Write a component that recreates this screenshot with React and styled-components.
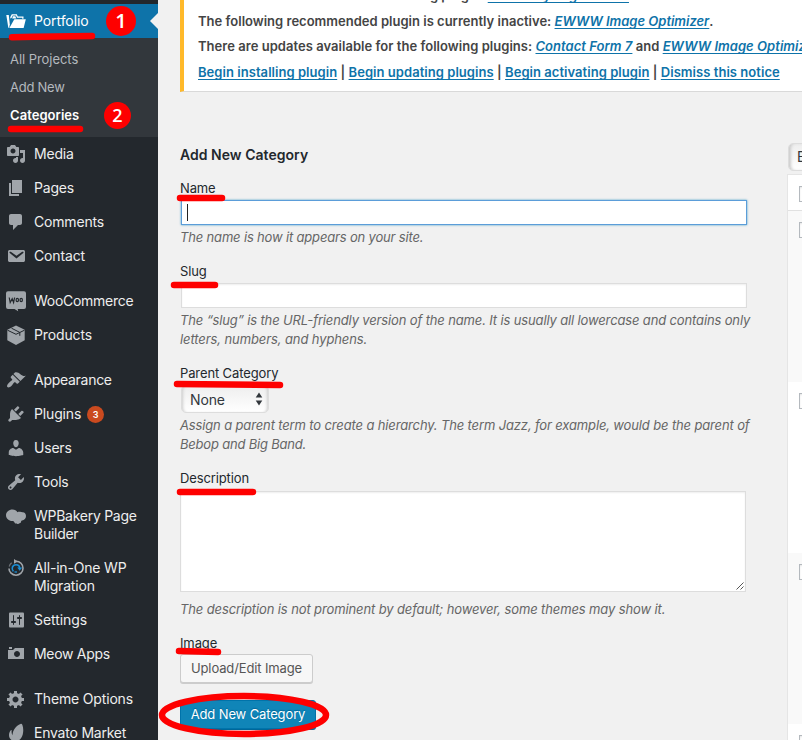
import React from 'react';
import styled, { createGlobalStyle, css } from 'styled-components';

const GlobalStyle = createGlobalStyle`
  * { box-sizing: border-box; }
  html, body { margin: 0; overflow: hidden; background: #f1f1f1; }
  body {
    font-family: Inter, "Liberation Sans", sans-serif;
    font-size: 13px;
    color: #444;
  }
`;

const Page = styled.div`
  position: relative;
  display: flex;
  width: 802px;
  height: 740px;
  overflow: hidden;
  background: #f1f1f1;
`;

/* ---------- sidebar ---------- */

const Sidebar = styled.nav`
  flex: none;
  width: 158px;
  height: 740px;
  padding-top: 4px;
  overflow: hidden;
  background: #23282d;
`;

const MenuItem = styled.a`
  position: relative;
  display: flex;
  align-items: flex-start;
  height: ${(p) => (p.$tall ? 52 : 34)}px;
  padding: 8px 0 0 34px;
  margin-top: ${(p) => (p.$gap ? 11 : 0)}px;
  color: ${(p) => (p.$active ? '#fff' : '#eee')};
  background: ${(p) => (p.$active ? '#0e73a9' : 'transparent')};
  font-size: 14px;
  line-height: 18px;
  white-space: pre-line;
`;

const MenuText = styled.span`
  letter-spacing: ${(p) => p.$ls || 0}px;
`;

const MenuIcon = styled.svg`
  position: absolute;
  left: 6px;
  top: 7px;
  width: 20px;
  height: 20px;
  fill: ${(p) => (p.$active ? '#fff' : '#a0a5aa')};
`;

const CurrentArrow = styled.span`
  position: absolute;
  right: 0;
  top: 9px;
  border: 8px solid transparent;
  border-left: 0;
  border-right-color: #f1f1f1;
`;

const Submenu = styled.div`
  height: 99px;
  padding: 7px 10px 8px;
  background: #32373c;
`;

const SubmenuItem = styled.a`
  display: block;
  height: 28px;
  line-height: 28px;
  font-size: 13px;
  letter-spacing: ${(p) => p.$ls || 0}px;
  color: ${(p) => (p.$current ? '#fff' : '#b4b9be')};
  font-weight: ${(p) => (p.$current ? 600 : 400)};
`;

const CountBadge = styled.span`
  width: 17px;
  height: 17px;
  margin: 1px 0 0 6px;
  border-radius: 50%;
  background: #ca4a1f;
  color: #fff;
  font-size: 9px;
  font-weight: 600;
  line-height: 17px;
  text-align: center;
`;

/* ---------- content ---------- */

const Content = styled.main`
  flex: 1;
  min-width: 0;
  height: 740px;
  padding-left: 22px;
  overflow: hidden;
`;

const Notice = styled.section`
  height: 92px;
  padding-left: 14px;
  border-left: 4px solid #ffb92a;
  border-bottom: 1px solid #d9d9d9;
  background: #fff;
  overflow: hidden;
`;

const NoticeLines = styled.div`
  display: flex;
  flex-direction: column;
  gap: 5.5px;
  margin-top: -15px;
`;

const NoticeLine = styled.div`
  height: 20px;
  line-height: 20px;
  font-weight: 600;
  white-space: pre;
  letter-spacing: ${(p) => p.$ls || 0}px;
`;

const NoticeLink = styled.a`
  color: #0e73a9;
  letter-spacing: ${(p) => (p.$ls ? `${p.$ls}px` : 'inherit')};
  font-style: ${(p) => (p.$italic ? 'italic' : 'normal')};
  text-decoration: underline;
  text-underline-offset: 2px;
  text-decoration-thickness: 1px;
  text-decoration-skip-ink: none;
`;

const Columns = styled.div`
  display: flex;
  margin-top: 51px;
`;

const Form = styled.form`
  flex: none;
  width: 607px;
  padding-top: 2px;
`;

const FormTitle = styled.h2`
  margin: 0 0 14px;
  height: 20px;
  line-height: 20px;
  font-size: 14px;
  font-weight: 600;
  letter-spacing: 0.03px;
  color: #23282d;
`;

const Field = styled.div`
  display: flex;
  flex-direction: column;
  align-items: flex-start;
  margin-bottom: 15px;
`;

const Label = styled.label`
  height: 19px;
  line-height: 19px;
  font-size: 13px;
  letter-spacing: -0.12px;
  color: #23282d;
`;

const Hint = styled.p`
  margin: ${(p) => p.$top || 3}px 0 0;
  font-style: italic;
  line-height: 19px;
  color: #666;
  white-space: pre;
`;

const HintLine = styled.span`
  display: block;
  letter-spacing: ${(p) => p.$ls || -0.14}px;
`;

const inputBox = css`
  border: 1px solid #ddd;
  background: #fff;
  box-shadow: inset 0 1px 2px rgba(0, 0, 0, 0.07);
`;

const TextInput = styled.div`
  ${inputBox}
  display: flex;
  align-items: center;
  width: 566px;
  height: 25px;
  margin: 2px 0 0 1px;
  padding-left: 5px;
  ${(p) => p.$focused && css`
    border-color: #5b9dd9;
    box-shadow: 0 0 2px rgba(30, 140, 190, 0.8);
  `}
`;

const Caret = styled.span`
  width: 1px;
  height: 17px;
  background: #222;
`;

const TextArea = styled.div`
  ${inputBox}
  display: flex;
  align-items: flex-end;
  justify-content: flex-end;
  width: 566px;
  height: 101px;
  margin-top: 3px;
  padding: 1px;
`;

const SelectBox = styled.div`
  display: flex;
  align-items: center;
  justify-content: space-between;
  width: 88px;
  height: 28px;
  margin: 2px 0 0 1px;
  padding: 0 5px 0 8px;
  border: 1px solid #ddd;
  border-radius: 5px;
  background: linear-gradient(#eee, #fff);
  box-shadow: inset 3px 0 3px -2px #ccc, inset -3px 0 3px -2px #ccc;
  color: #32373c;
  font-size: 14px;
  letter-spacing: -0.15px;
`;

const Button = styled.button`
  display: flex;
  align-items: center;
  justify-content: center;
  width: ${(p) => p.$width}px;
  height: 29px;
  padding: 0 0 1px;
  margin: 1px 0 0;
  border: 1px solid ${(p) => (p.$primary ? '#0073aa' : '#ccc')};
  border-radius: 3px;
  box-shadow: 0 1px 0 ${(p) => (p.$primary ? '#006799' : '#ccc')};
  background: ${(p) => (p.$primary ? '#1085b8' : '#f7f7f7')};
  color: ${(p) => (p.$primary ? '#fff' : '#555')};
  text-shadow: ${(p) => (p.$primary ? '0 -1px 1px #006799' : 'none')};
  font: 13px Inter, "Liberation Sans", sans-serif;
  letter-spacing: -0.13px;
  white-space: nowrap;
`;

const Submit = styled.div`
  padding-top: 1px;
`;

/* ---------- term list ---------- */

const TermList = styled.section`
  flex: none;
  width: 200px;
`;

const BulkSelect = styled.div`
  height: 28px;
  margin: 0 0 3px 1px;
  padding-left: 8px;
  border: 1px solid #ddd;
  border-radius: 5px;
  background: linear-gradient(#eee, #fff);
  box-shadow: inset 3px 0 3px -1px #ccc;
  color: #32373c;
  font-size: 14px;
  line-height: 26px;
`;

const TermTable = styled.div`
  border: 1px solid #e5e5e5;
  background: #fff;
`;

const TermRow = styled.div`
  height: ${(p) => (p.$head ? 36 : 171)}px;
  padding: 11px;
  border-bottom: ${(p) => (p.$head ? '1px solid #e1e1e1' : '0')};
  background: ${(p) => (p.$alt ? '#f9f9f9' : '#fff')};
`;

const Checkbox = styled.span`
  display: block;
  width: 16px;
  height: 16px;
  border: 1px solid #b4b9be;
  background: #fff;
  box-shadow: inset 0 1px 2px rgba(0, 0, 0, 0.1);
`;

/* ---------- annotations ---------- */

const MarkerLayer = styled.svg`
  position: absolute;
  inset: 0;
  width: 802px;
  height: 740px;
  pointer-events: none;
  fill: none;
  stroke: #fe0000;
  stroke-linecap: round;
`;

const StepBadge = styled.span`
  position: absolute;
  left: ${(p) => p.$x}px;
  top: ${(p) => p.$y}px;
  width: ${(p) => p.$size}px;
  height: ${(p) => p.$size}px;
  border-radius: 50%;
  background: #fe0000;
  color: #fff;
  font-family: "Open Sans", sans-serif;
  font-size: ${(p) => p.$font}px;
  font-weight: 600;
  line-height: ${(p) => p.$size}px;
  text-align: center;
`;

const icons = {
  portfolio: (
    <>
      <path d="M.3 4h2.500l1 9.500L3.200 16.800H2.300z" />
      <path d="M4.300 7.500V6l1.500-2.800h5l1 2.300h5.700v2.300h-1.300V6.700H11l-1-2.300H6.700L5.500 7z" />
      <path d="M8.300 8.200H19.800L17.600 17H3.400z" />
      <path d="M6.900 5.200h2.400l1 2.300H6.200z" />
    </>
  ),
  media: <path d="M13 11V4c0-.55-.45-1-1-1h-1.67L9 1H5L3.67 3H2c-.55 0-1 .45-1 1v7c0 .55.45 1 1 1h10c.55 0 1-.45 1-1zM7 4.5c1.38 0 2.5 1.12 2.5 2.5S8.38 9.5 7 9.5 4.5 8.38 4.5 7 5.62 4.5 7 4.5zM14 6h5v10.5c0 1.38-1.12 2.5-2.5 2.5S14 17.88 14 16.5s1.12-2.5 2.5-2.5c.17 0 .34.02.5.05V9h-3V6zm-4 8.05V13h2v3.5c0 1.38-1.12 2.5-2.5 2.5S7 17.88 7 16.5 8.12 14 9.5 14c.17 0 .34.02.5.05z" />,
  pages: <path d="M6 15V2h10v13H6zm-1 1h8v2H3V5h2v11z" />,
  comments: <path d="M5 2h9c1.1 0 2 .9 2 2v7c0 1.1-.9 2-2 2h-2l-5 5v-5H5c-1.1 0-2-.9-2-2V4c0-1.1.9-2 2-2z" />,
  mail: <path d="M3.87 4h13.25C18.37 4 19 4.59 19 5.79v8.42c0 1.19-.63 1.79-1.88 1.79H3.87c-1.25 0-1.88-.6-1.88-1.79V5.79c0-1.2.63-1.79 1.88-1.79zm6.62 8.6l6.74-5.53c.24-.2.43-.66.13-1.07-.29-.41-.82-.42-1.17-.17l-5.7 3.86L4.8 5.83c-.35-.25-.88-.24-1.17.17-.3.41-.11.87.13 1.07z" />,
  woo: (
    <>
      <path d="M2 .3h16a2 2 0 0 1 2 2V16a2 2 0 0 1-2 2h-6.300l.5 2.200L8.500 18H2a2 2 0 0 1-2-2V2.300a2 2 0 0 1 2-2z" />
      <path d="M3.200 6.500l1 5 2-3.800 1.400 3.800 1-5" fill="none" stroke="#23282d" strokeWidth="1.200" />
      <g fill="none" stroke="#23282d" strokeWidth="1.200">
        <ellipse cx="11.300" cy="9" rx="1.200" ry="1.700" />
        <ellipse cx="15.200" cy="9" rx="1.200" ry="1.700" />
      </g>
    </>
  ),
  products: (
    <>
      <path d="M10 .5l8.700 4.200v10.500L10 20l-8.700-4.800V4.700z" />
      <path d="M1.500 5.200L10 9.300l8.500-4.100M5.500 3.200l8.300 4.200v3.400M10 9.500" fill="none" stroke="#23282d" strokeWidth="1" />
    </>
  ),
  appearance: <path d="M14.48 11.06L7.41 3.99l1.5-1.5c.5-.56 2.3-.47 3.51.32 1.21.8 1.43 1.28 2.91 2.1 1.18.64 2.45 1.26 4.45.85zm-.71.71L6.7 4.7 4.93 6.47c-.39.39-.39 1.02 0 1.41l1.06 1.06c.39.39.39 1.03 0 1.42-.6.6-1.43 1.11-2.21 1.69-.35.26-.7.53-1.01.84C1.43 14.23.4 16.08 1.4 17.07c.99 1 2.84-.03 4.18-1.36.31-.31.58-.66.85-1.02.57-.78 1.08-1.61 1.69-2.21.39-.39 1.02-.39 1.41 0l1.06 1.06c.39.39 1.02.39 1.41 0z" />,
  plugins: <path d="M13.11 4.36L9.87 7.6 8 5.73l3.24-3.24c.35-.34 1.05-.2 1.56.32.52.51.66 1.21.31 1.55zm-8 1.77l.91-1.12 9.01 9.01-1.19.84c-.71.71-2.63 1.16-3.82 1.16H6.14L4.9 17.26c-.59.59-1.54.59-2.12 0-.59-.58-.59-1.53 0-2.12l1.24-1.24v-3.88c0-1.13.4-3.19 1.09-3.89zm7.26 3.97l3.24-3.24c.34-.35 1.04-.21 1.55.31.52.51.66 1.21.31 1.55l-3.24 3.25z" />,
  users: <path d="M10 9.25c-2.27 0-2.73-3.44-2.73-3.44C7 4.02 7.82 2 9.97 2c2.16 0 2.98 2.02 2.71 3.81 0 0-.41 3.44-2.68 3.44zm0 2.57L12.72 10c2.39 0 4.52 2.33 4.52 4.53v2.49s-3.65 1.13-7.24 1.13c-3.65 0-7.24-1.13-7.24-1.13v-2.49c0-2.25 1.94-4.48 4.47-4.48z" />,
  tools: <path d="M16.68 9.77c-1.34 1.34-3.3 1.67-4.95.99l-5.41 6.52c-.99.99-2.59.99-3.58 0s-.99-2.59 0-3.57l6.52-5.42c-.68-1.65-.35-3.61.99-4.95 1.28-1.28 3.12-1.62 4.72-1.06l-2.89 2.89 2.82 2.82 2.86-2.87c.53 1.58.18 3.39-1.08 4.65zM3.81 16.21c.4.39 1.04.39 1.43 0 .4-.4.4-1.04 0-1.43-.39-.4-1.03-.4-1.43 0-.39.39-.39 1.03 0 1.43z" />,
  bakery: (
    <path d="M6.500 3.500c2.300 0 4 .9 4.900 2.700.6-.4 1.400-.5 2.200-.4 1-.1 2 .1 2.800.5 1.900-.3 3.600 1.500 3.600 3.700 0 2.400-1.600 4.300-4 4.400l-.9.5c.3 1-.4 2.300-1.600 2.300-.8.9-2 .9-2.700.2-1 .5-2.200 0-2.400-1.200-.4-.6-.8-1-1.300-1.200C3.200 15.400 0 12.700 0 9.300c0-3.300 2.900-5.800 6.500-5.800z" />
  ),
  migration: (
    <g fill="none" strokeWidth="1.600">
      <path d="M10 3.300c4 0 7 3 7 6.900 0 3.900-3.100 7-7 7s-7-3.100-7-6.800" stroke="#a0a5aa" />
      <path d="M3.200 8.500c.4-1.600 1.200-2.800 2.500-3.800" stroke="#6d7379" strokeWidth="1.200" />
      <path d="M8 1v4.800L11.800 3.500z" fill="#a0a5aa" stroke="none" />
      <path d="M7.400 13.300C5 11 6.300 6.700 10 6.700c2.100 0 3.600 1.500 3.600 3.300" stroke="#1b8fd6" />
      <path d="M11.300 9.500h5l-2.700 3.200z" fill="#1b8fd6" stroke="none" />
      <path d="M8.500 14h2.500" stroke="#1b8fd6" strokeWidth="1.300" />
    </g>
  ),
  settings: <path d="M18 16V4c0-1.1-.4-1.500-1.500-1.500H4.500C3.400 2.500 3 2.900 3 4v12c0 1.100.4 1.500 1.500 1.500h12c1.100 0 1.500-.4 1.500-1.500zM8 11h1c.55 0 1 .45 1 1s-.45 1-1 1H8v1.5c0 .28-.22.5-.5.5s-.5-.22-.5-.5V13H6c-.55 0-1-.45-1-1s.45-1 1-1h1V5.5c0-.28.22-.5.5-.5s.5.22.5.5V11zm5-2h-1c-.55 0-1-.45-1-1s.45-1 1-1h1V5.5c0-.28.22-.5.5-.5s.5.22.5.5V7h1c.55 0 1 .45 1 1s-.45 1-1 1h-1v5.5c0 .28-.22.5-.5.5s-.5-.22-.5-.5V9z" />,
  camera: <path d="M6 5V3H3v2h3zm12 10V4H9L7 6H2v9h16zm-7-8c1.65 0 3 1.35 3 3s-1.35 3-3 3-3-1.35-3-3 1.35-3 3-3z" />,
  gear: <path d="M18 12h-2.18c-.17.7-.44 1.35-.81 1.93l1.54 1.54-2.1 2.1-1.54-1.54c-.58.36-1.23.63-1.91.79V19H8v-2.18c-.68-.16-1.33-.43-1.91-.79l-1.54 1.54-2.12-2.12 1.54-1.54c-.36-.58-.63-1.23-.79-1.91H1V9.03h2.170c.16-.7.44-1.35.8-1.94L2.430 5.550l2.100-2.100 1.540 1.540c.58-.37 1.240-.64 1.930-.81V2h3v2.180c.68.16 1.330.43 1.910.79l1.540-1.540 2.120 2.120-1.540 1.540c.36.59.64 1.240.8 1.940H18V12zm-8.500 1.500c1.660 0 3-1.340 3-3s-1.340-3-3-3-3 1.340-3 3 1.340 3 3 3z" />,
  envato: (
    <path d="M14.500 1c.8-.4 1.500 0 1.900 1 1.500 4 1 9.500-1.100 12.800-1.600 2.600-4.500 4-7.600 3.200-2.800-.7-4.700-3-4.700-5.800 0-1.900.7-3.700 1.800-5 .4-.4 1-.2.900.4-.3 1.900 0 3.500.9 4.700C6.300 8 9.800 2.800 14.500 1z" />
  ),
};

const menu = [
  { icon: 'media', text: 'Media', ls: -0.2 },
  { icon: 'pages', text: 'Pages', ls: -0.2 },
  { icon: 'comments', text: 'Comments', ls: -0.18 },
  { icon: 'mail', text: 'Contact', ls: -0.15 },
  { icon: 'woo', text: 'WooCommerce', ls: -0.28, gap: true },
  { icon: 'products', text: 'Products', ls: -0.13 },
  { icon: 'appearance', text: 'Appearance', ls: -0.28, gap: true },
  { icon: 'plugins', text: 'Plugins', ls: -0.15, count: 3 },
  { icon: 'users', text: 'Users', ls: -0.2 },
  { icon: 'tools', text: 'Tools', ls: -0.2 },
  { icon: 'bakery', text: 'WPBakery Page\nBuilder', ls: -0.27, tall: true },
  { icon: 'migration', text: 'All-in-One WP\nMigration', ls: -0.18, tall: true },
  { icon: 'settings', text: 'Settings', ls: -0.08 },
  { icon: 'camera', text: 'Meow Apps', ls: -0.3 },
  { icon: 'gear', text: 'Theme Options', ls: -0.17, gap: true },
  { icon: 'envato', text: 'Envato Market', ls: -0.22 },
];

function MenuEntry({ icon, text, gap, tall, count, active, ls }) {
  return (
    <MenuItem $gap={gap} $tall={tall} $active={active}>
      <MenuIcon viewBox="0 0 20 20" overflow="visible" $active={active}>{icons[icon]}</MenuIcon>
      <MenuText $ls={ls}>{text}</MenuText>
      {count && <CountBadge>{count}</CountBadge>}
      {active && <CurrentArrow />}
    </MenuItem>
  );
}

export default function App() {
  return (
    <Page>
      <GlobalStyle />
      <Sidebar>
        <MenuEntry icon="portfolio" text="Portfolio" ls={-0.08} active />
        <Submenu>
          <SubmenuItem $ls={-0.05}>All Projects</SubmenuItem>
          <SubmenuItem $ls={-0.25}>Add New</SubmenuItem>
          <SubmenuItem $ls={0.05} $current>Categories</SubmenuItem>
        </Submenu>
        {menu.map((item) => <MenuEntry key={item.text} {...item} />)}
      </Sidebar>

      <Content>
        <Notice>
          <NoticeLines>
            <NoticeLine>This theme recommends the following plugin: <NoticeLink $italic $ls={-0.37}>WPBakery Page Builder</NoticeLink>.</NoticeLine>
            <NoticeLine $ls={0.01}>The following recommended plugin is currently inactive: <NoticeLink $italic $ls={-0.02}>EWWW Image Optimizer</NoticeLink>.</NoticeLine>
            <NoticeLine $ls={0.035}>There are updates available for the following plugins: <NoticeLink $italic>Contact Form 7</NoticeLink> and <NoticeLink $italic>EWWW Image Optimizer</NoticeLink>.</NoticeLine>
            <NoticeLine $ls={0.045}><NoticeLink>Begin installing plugin</NoticeLink> | <NoticeLink>Begin updating plugins</NoticeLink> | <NoticeLink>Begin activating plugin</NoticeLink> | <NoticeLink>Dismiss this notice</NoticeLink></NoticeLine>
          </NoticeLines>
        </Notice>

        <Columns>
          <Form>
            <FormTitle>Add New Category</FormTitle>
            <Field>
              <Label>Name</Label>
              <TextInput $focused><Caret /></TextInput>
              <Hint><HintLine $ls={-0.17}>The name is how it appears on your site.</HintLine></Hint>
            </Field>
            <Field>
              <Label>Slug</Label>
              <TextInput />
              <Hint>
                <HintLine>The “slug” is the URL-friendly version of the name. It is usually all lowercase and contains only</HintLine>
                <HintLine $ls={-0.1}>letters, numbers, and hyphens.</HintLine>
              </Hint>
            </Field>
            <Field>
              <Label>Parent Category</Label>
              <SelectBox>
                None
                <svg width="8" height="14" viewBox="0 0 8 14" fill="#32373c">
                  <path d="M4 .5L7.300 5.500H.7zM4 13.500L.7 8.500h6.600z" />
                </svg>
              </SelectBox>
              <Hint>
                <HintLine>Assign a parent term to create a hierarchy. The term Jazz, for example, would be the parent of</HintLine>
                <HintLine $ls={-0.2}>Bebop and Big Band.</HintLine>
              </Hint>
            </Field>
            <Field>
              <Label>Description</Label>
              <TextArea>
                <svg width="8" height="8" viewBox="0 0 8 8" stroke="#555" strokeWidth="1">
                  <path d="M.5 7.500l7-7M4.500 7.500l3-3" />
                </svg>
              </TextArea>
              <Hint $top={8}><HintLine $ls={-0.12}>The description is not prominent by default; however, some themes may show it.</HintLine></Hint>
            </Field>
            <Field>
              <Label>Image</Label>
              <Button type="button" $width={133}>Upload/Edit Image</Button>
            </Field>
            <Submit>
              <Button type="button" $primary $width={136}>Add New Category</Button>
            </Submit>
          </Form>

          <TermList>
            <BulkSelect>Bulk Actions</BulkSelect>
            <TermTable>
              <TermRow $head><Checkbox /></TermRow>
              <TermRow $alt><Checkbox /></TermRow>
              <TermRow><Checkbox /></TermRow>
              <TermRow $alt><Checkbox /></TermRow>
              <TermRow><Checkbox /></TermRow>
            </TermTable>
          </TermList>
        </Columns>
      </Content>

      <MarkerLayer viewBox="0 0 802 740" strokeWidth="6.500">
        <path d="M12 37.200L35 36.700L92 36" />
        <path d="M11 129H80" />
        <path d="M180 198H222" />
        <path d="M174 285H215" />
        <path d="M177 384L280 385" />
        <path d="M180 492H253" />
        <path d="M179 651L218 652" />
        <ellipse cx="244" cy="715" rx="82" ry="19" strokeWidth="6.500" />
      </MarkerLayer>
      <StepBadge $x={106} $y={6} $size={30} $font={20}>1</StepBadge>
      <StepBadge $x={104} $y={102} $size={27} $font={18}>2</StepBadge>
    </Page>
  );
}
